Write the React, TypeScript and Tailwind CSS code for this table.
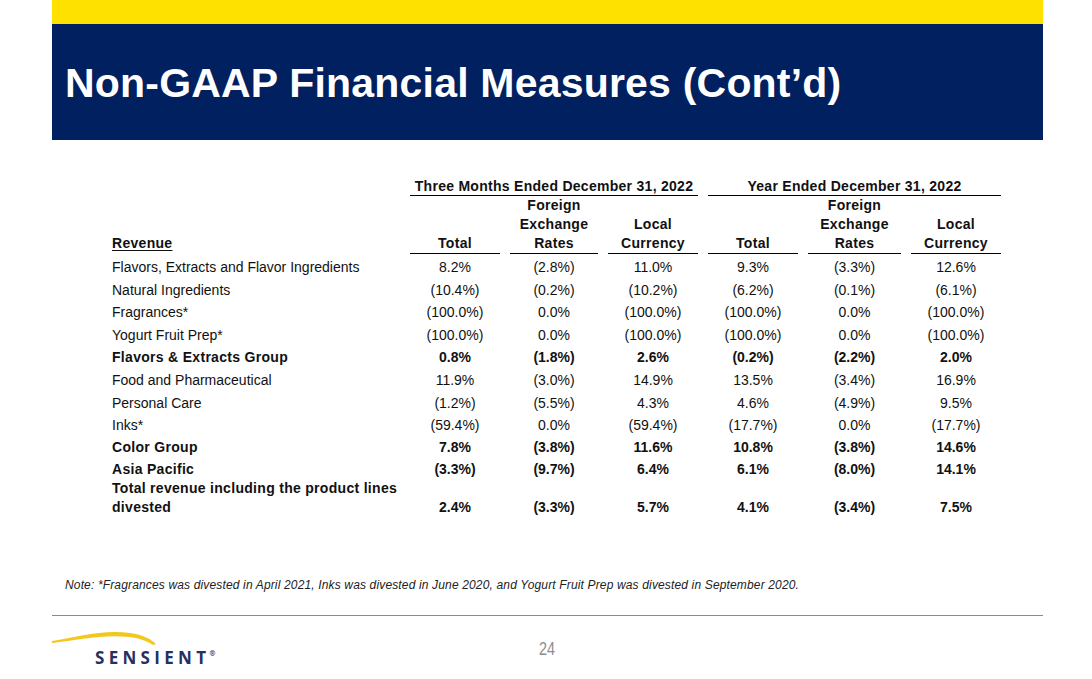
import React from "react";

type Row = { label: React.ReactNode; vals: string[]; bold?: boolean; h: string; two?: boolean };

const rows: Row[] = [
  { label: "Flavors, Extracts and Flavor Ingredients", vals: ["8.2%", "(2.8%)", "11.0%", "9.3%", "(3.3%)", "12.6%"], h: "h-[24px]" },
  { label: "Natural Ingredients", vals: ["(10.4%)", "(0.2%)", "(10.2%)", "(6.2%)", "(0.1%)", "(6.1%)"], h: "h-[22px]" },
  { label: "Fragrances*", vals: ["(100.0%)", "0.0%", "(100.0%)", "(100.0%)", "0.0%", "(100.0%)"], h: "h-[23px]" },
  { label: "Yogurt Fruit Prep*", vals: ["(100.0%)", "0.0%", "(100.0%)", "(100.0%)", "0.0%", "(100.0%)"], h: "h-[22px]" },
  { label: "Flavors & Extracts Group", vals: ["0.8%", "(1.8%)", "2.6%", "(0.2%)", "(2.2%)", "2.0%"], bold: true, h: "h-[22px]" },
  { label: "Food and Pharmaceutical", vals: ["11.9%", "(3.0%)", "14.9%", "13.5%", "(3.4%)", "16.9%"], h: "h-[24px]" },
  { label: "Personal Care", vals: ["(1.2%)", "(5.5%)", "4.3%", "4.6%", "(4.9%)", "9.5%"], h: "h-[22px]" },
  { label: "Inks*", vals: ["(59.4%)", "0.0%", "(59.4%)", "(17.7%)", "0.0%", "(17.7%)"], h: "h-[22px]" },
  { label: "Color Group", vals: ["7.8%", "(3.8%)", "11.6%", "10.8%", "(3.8%)", "14.6%"], bold: true, h: "h-[22px]" },
  { label: "Asia Pacific", vals: ["(3.3%)", "(9.7%)", "6.4%", "6.1%", "(8.0%)", "14.1%"], bold: true, h: "h-[22px]" },
  {
    label: (
      <>
        Total revenue including the product lines
        <br />
        divested
      </>
    ),
    vals: ["2.4%", "(3.3%)", "5.7%", "4.1%", "(3.4%)", "7.5%"],
    bold: true,
    h: "h-[37px]",
    two: true,
  },
];

const colHeads: string[][] = [
  ["Total"],
  ["Foreign", "Exchange", "Rates"],
  ["Local", "Currency"],
  ["Total"],
  ["Foreign", "Exchange", "Rates"],
  ["Local", "Currency"],
];

export default function App() {
  return (
    <div className="w-[1092px] h-[679px] bg-white overflow-hidden font-['Liberation_Sans',Arial,sans-serif] text-[#111]">
      {/* Header band */}
      <div className="ml-[52px] w-[991px]">
        <div className="h-[24px] bg-[#FFE100]" />
        <div className="h-[116px] bg-[#002060] flex items-center pl-[13px] pt-[3px]">
          <h1 className="text-white font-bold text-[41px] leading-none tracking-[0.2px] whitespace-nowrap">
            Non-GAAP Financial Measures (Cont’d)
          </h1>
        </div>
      </div>

      {/* Table */}
      <div className="pl-[112px] pt-[38px]">
        <div className="grid grid-cols-[288px_90px_88px_90px_90px_93px_90px] gap-x-[10px] text-[14px]">
          {/* Period row */}
          <div />
          <div className="col-span-3 h-[18px] flex items-center justify-center border-b-[1.5px] border-black font-bold tracking-[0.28px]">
            Three Months Ended December 31, 2022
          </div>
          <div className="col-span-3 h-[18px] flex items-center justify-center border-b-[1.5px] border-black font-bold tracking-[0.28px]">
            Year Ended December 31, 2022
          </div>

          {/* Column heads */}
          <div className="h-[58px] flex items-end pb-[1px] leading-[19px] font-bold">
            <span className="underline underline-offset-[2px] tracking-[0.3px]">Revenue</span>
          </div>
          {colHeads.map((lines, i) => (
            <div
              key={i}
              className="h-[58px] flex flex-col justify-end items-center border-b-[1.5px] border-black font-bold leading-[19px] tracking-[0.3px]"
            >
              {lines.map((l) => (
                <div key={l}>{l}</div>
              ))}
            </div>
          ))}

          {/* Data rows */}
          {rows.map((r, ri) => (
            <React.Fragment key={ri}>
              <div
                className={`${r.h} flex whitespace-nowrap ${r.two ? "items-end leading-[19px]" : "items-center"} ${
                  r.bold ? "font-bold tracking-[0.3px]" : ""
                } ${ri === 0 ? "mt-[1px]" : ""}`}
              >
                <div>{r.label}</div>
              </div>
              {r.vals.map((v, vi) => (
                <div
                  key={vi}
                  className={`${r.h} flex justify-center ${r.two ? "items-end leading-[19px]" : "items-center"} ${
                    r.bold ? "font-bold" : ""
                  } ${ri === 0 ? "mt-[1px]" : ""}`}
                >
                  {v}
                </div>
              ))}
            </React.Fragment>
          ))}
        </div>
      </div>

      {/* Note */}
      <div className="pl-[65px] mt-[61px] text-[12px] italic leading-[14px] tracking-[0.15px] text-[#222]">
        Note: *Fragrances was divested in April 2021, Inks was divested in June 2020, and Yogurt Fruit Prep was divested in September 2020.
      </div>

      {/* Divider */}
      <div className="ml-[52px] w-[991px] mt-[23px] border-t-[1.5px] border-[#8a8a8a]" />

      {/* Footer */}
      <div className="flex">
        <div className="ml-[52px] w-[487px] relative h-[60px]">
          <svg className="absolute left-0 top-[12px]" width="110" height="22" viewBox="0 0 110 22">
            <path
              d="M0 13 C 25 9, 52 1, 78 5 C 91 7, 99 11, 104 16 L 101 17 C 95 13, 87 10, 77 9 C 52 6, 26 12, 0 15 Z"
              fill="#F2C81C"
            />
          </svg>
          <div className="absolute left-[43px] top-[33px] text-[17px] font-bold leading-none tracking-[4.3px] text-[#27305F] font-['Open_Sans','Liberation_Sans',sans-serif]">
            SENSIENT
            <span className="absolute -right-[5px] top-[1px] text-[7px] tracking-normal">®</span>
          </div>
        </div>
        <div className="pt-[24px] text-[18px] text-[#8c8c8c] leading-none scale-x-[0.8] origin-left">24</div>
      </div>
    </div>
  );
}
